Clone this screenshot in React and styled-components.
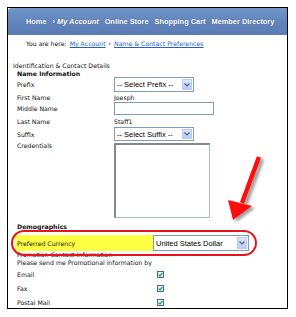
import React from "react";
import styled, { createGlobalStyle } from "styled-components";

const Global = createGlobalStyle`
  html, body { margin: 0; padding: 0; background: #fff; }
  body { font-family: "DejaVu Sans", Verdana, sans-serif; color: #111; }
`;

const Page = styled.div`
  position: relative;
  width: 296px;
  height: 317px;
  padding: 7px 0 0 7px;
  box-sizing: border-box;
`;

const Frame = styled.div`
  width: 281px;
  height: 302px;
  box-sizing: border-box;
  border: 1px solid #000;
  overflow: hidden;
  background: #fff;
  display: flex;
  flex-direction: column;
`;

const NavBar = styled.nav`
  height: 27px;
  flex: none;
  display: flex;
  align-items: center;
  gap: 6px;
  padding-left: 18px;
  background: linear-gradient(#7196c9, #5f83ba 60%, #587cb3);
  border-top-left-radius: 4px;
  font-family: "Liberation Sans", Arial, sans-serif;
  font-weight: bold;
  font-size: 7.4px;
  color: #fff;
  white-space: nowrap;
  text-shadow: 0 0 1px rgba(30, 50, 90, 0.6);
`;

const NavItem = styled.span`
  font-style: ${(p) => (p.$active ? "italic" : "normal")};
  &::before {
    content: ${(p) => (p.$active ? '"›"' : "none")};
    margin-right: 2px;
    font-style: normal;
  }
`;

const Crumbs = styled.div`
  height: 17px;
  flex: none;
  display: flex;
  align-items: center;
  padding-left: 18px;
  font-size: 6.2px;
  white-space: nowrap;
  gap: 3px;
`;

const CrumbLink = styled.a`
  color: #1e5fd0;
  text-decoration: underline;
`;

const Form = styled.div`
  padding: 10px 0 0 9px;
  font-size: 6.2px;
  display: flex;
  flex-direction: column;
`;

const SectionTitle = styled.div`
  height: ${(p) => p.$h}px;
  display: flex;
  align-items: center;
  margin-left: ${(p) => p.$indent || 0}px;
  font-weight: ${(p) => (p.$bold ? "bold" : "normal")};
  white-space: nowrap;
`;

const Row = styled.div`
  height: ${(p) => p.$h}px;
  display: grid;
  grid-template-columns: 97px 1fr;
  align-items: ${(p) => (p.$top ? "start" : "center")};
  white-space: nowrap;
`;

const Label = styled.span`
  padding-top: ${(p) => p.$pt || 0}px;
`;

const SelectBox = styled.div`
  width: ${(p) => p.$w}px;
  height: ${(p) => p.$h}px;
  box-sizing: border-box;
  border: 1px solid #7f9db9;
  background: #fff;
  display: flex;
  align-items: center;
  font-family: "Liberation Sans", Arial, sans-serif;
  font-size: ${(p) => p.$fs}px;
  color: #000;
  padding-left: 2px;
`;

const SelectText = styled.span`
  flex: 1;
`;

const SelectButton = styled.span`
  width: 10px;
  align-self: stretch;
  margin: 1px;
  background: linear-gradient(#dbe6fc, #b7cbf5);
  border: 1px solid #b9cdf3;
  box-sizing: border-box;
  display: flex;
  align-items: center;
  justify-content: center;
`;

const TextInput = styled.div`
  width: 100px;
  height: 13px;
  box-sizing: border-box;
  border: 1px solid #7f9db9;
  background: #fff;
`;

const TextArea = styled.div`
  width: 96px;
  height: 75px;
  margin-top: 2px;
  box-sizing: border-box;
  border: 1px solid #a5b9d1;
  border-top: 2px solid #888;
  border-left: 2px solid #888;
  background: #fff;
`;

const HighlightRow = styled.div`
  height: 16px;
  margin: 5px 0 0 -2px;
  display: flex;
  align-items: center;
  white-space: nowrap;
`;

const HighlightLabel = styled.span`
  width: 138px;
  height: 100%;
  background: #ffff44;
  display: flex;
  align-items: center;
  padding-left: 2px;
  box-sizing: border-box;
`;

const CheckRow = styled.div`
  height: ${(p) => p.$h}px;
  display: grid;
  grid-template-columns: 140px 1fr;
  align-items: center;
`;

const Check = styled.span`
  width: 7px;
  height: 7px;
  box-sizing: border-box;
  border: 1px solid #3a6ea5;
  background: #eef2f6;
  display: flex;
  align-items: center;
  justify-content: center;
`;

const Ring = styled.div`
  position: absolute;
  left: 11px;
  top: 230px;
  width: 246px;
  height: 26px;
  box-sizing: border-box;
  border: 2px solid #e8131b;
  border-radius: 13px;
  pointer-events: none;
`;

const Arrow = styled.svg`
  position: absolute;
  left: 220px;
  top: 150px;
  overflow: visible;
`;

const Chevron = () => (
  <svg width="6" height="4" viewBox="0 0 6 4">
    <path d="M0.5 0.5 L3 3 L5.5 0.5" fill="none" stroke="#4d6185" strokeWidth="1.2" />
  </svg>
);

const Tick = () => (
  <svg width="5" height="5" viewBox="0 0 5 5">
    <path d="M0.6 2.6 L2 4 L4.4 0.8" fill="none" stroke="#21a121" strokeWidth="1.2" />
  </svg>
);

const Select = ({ text, w, h, fs }) => (
  <SelectBox $w={w} $h={h} $fs={fs}>
    <SelectText>{text}</SelectText>
    <SelectButton>
      <Chevron />
    </SelectButton>
  </SelectBox>
);

export default function App() {
  return (
    <>
      <Global />
      <Page>
        <Frame>
          <NavBar>
            <NavItem>Home</NavItem>
            <NavItem $active>My Account</NavItem>
            <NavItem>Online Store</NavItem>
            <NavItem>Shopping Cart</NavItem>
            <NavItem>Member Directory</NavItem>
          </NavBar>
          <Crumbs>
            <span>You are here:</span>
            <CrumbLink>My Account</CrumbLink>
            <span>›</span>
            <CrumbLink>Name &amp; Contact Preferences</CrumbLink>
          </Crumbs>
          <Form>
            <SectionTitle $h={7} $indent={-4}>Identification &amp; Contact Details</SectionTitle>
            <SectionTitle $h={8} $bold>Name Information</SectionTitle>
            <Row $h={15}>
              <Label>Prefix</Label>
              <Select text="-- Select Prefix --" w={80} h={15} fs={7.5} />
            </Row>
            <Row $h={10}>
              <Label>First Name</Label>
              <span>Joesph</span>
            </Row>
            <Row $h={13}>
              <Label>Middle Name</Label>
              <TextInput />
            </Row>
            <Row $h={12}>
              <Label>Last Name</Label>
              <span>Staff1</span>
            </Row>
            <Row $h={14}>
              <Label>Suffix</Label>
              <Select text="-- Select Suffix --" w={80} h={14} fs={7.5} />
            </Row>
            <Row $h={81} $top>
              <Label $pt={1}>Credentials</Label>
              <TextArea />
            </Row>
            <SectionTitle $h={8} $bold>Demographics</SectionTitle>
            <HighlightRow>
              <HighlightLabel>Preferred Currency</HighlightLabel>
              <Select text="United States Dollar" w={96} h={16} fs={7.5} />
            </HighlightRow>
            <SectionTitle $h={7}>Promotion Contact Information</SectionTitle>
            <SectionTitle $h={9}>Please send me Promotional information by</SectionTitle>
            <CheckRow $h={14}>
              <span>Email</span>
              <Check><Tick /></Check>
            </CheckRow>
            <CheckRow $h={15}>
              <span>Fax</span>
              <Check><Tick /></Check>
            </CheckRow>
            <CheckRow $h={13}>
              <span>Postal Mail</span>
              <Check><Tick /></Check>
            </CheckRow>
          </Form>
        </Frame>
        <Ring />
        <Arrow width="50" height="80" viewBox="0 0 50 80">
          <defs>
            <filter id="sh" x="-50%" y="-50%" width="200%" height="200%">
              <feDropShadow dx="3" dy="2" stdDeviation="1.5" floodColor="#555" floodOpacity="0.6" />
            </filter>
          </defs>
          <g filter="url(#sh)">
            <path d="M39 7 L22 53" stroke="#ff1010" strokeWidth="4.5" strokeLinecap="butt" />
            <path d="M13 70 L8 50 L32 56 Z" fill="#ff1010" />
          </g>
        </Arrow>
      </Page>
    </>
  );
}
